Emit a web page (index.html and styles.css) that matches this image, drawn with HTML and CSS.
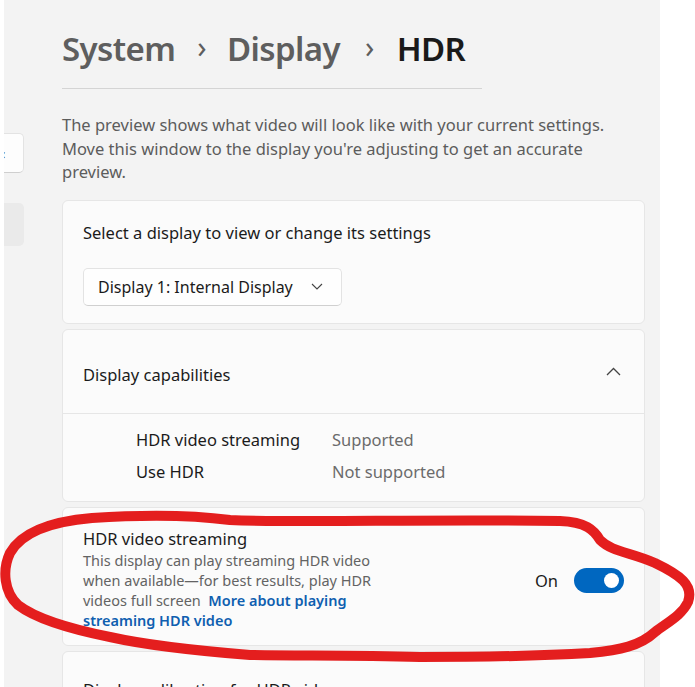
FILE: index.html
```html
<!DOCTYPE html>
<html lang="en">
<head>
<meta charset="utf-8">
<title>HDR</title>
<link rel="stylesheet" href="styles.css">
</head>
<body>
<div class="page">
  <div class="edge"></div>
  <div class="app">
    <nav class="nav">
      <div class="back-btn"><span class="back-glyph">‹</span></div>
      <div class="nav-item"></div>
    </nav>
    <main class="content">
      <h1 class="crumbs">
        <span class="crumb">System</span><span class="sep">›</span><span class="crumb">Display</span><span class="sep">›</span><span class="crumb current">HDR</span>
      </h1>
      <div class="rule"></div>
      <p class="intro">The preview shows what video will look like with your current settings. Move this window to the display you're adjusting to get an accurate preview.</p>

      <section class="card select-card">
        <div class="select-label">Select a display to view or change its settings</div>
        <div class="dropdown">
          <span>Display 1: Internal Display</span>
          <svg class="chev-down" width="12" height="7" viewBox="0 0 12 7"><path d="M1 1 L6 6 L11 1" fill="none" stroke="#444" stroke-width="1.1"/></svg>
        </div>
      </section>

      <section class="card caps-card">
        <div class="caps-head">
          <span>Display capabilities</span>
          <svg class="chev-up" width="15" height="9" viewBox="0 0 15 9"><path d="M1 8 L7.5 1.5 L14 8" fill="none" stroke="#444" stroke-width="1.3"/></svg>
        </div>
        <div class="caps-body">
          <div class="cap-row"><span class="cap-name">HDR video streaming</span><span class="cap-val">Supported</span></div>
          <div class="cap-row"><span class="cap-name">Use HDR</span><span class="cap-val">Not supported</span></div>
        </div>
      </section>

      <section class="card stream-card">
        <div class="stream-text">
          <div class="stream-title">HDR video streaming</div>
          <div class="stream-desc">This display can play streaming HDR video when available—for best results, play HDR videos full screen&nbsp; <a class="link">More about playing streaming HDR video</a></div>
        </div>
        <div class="toggle-wrap">
          <span class="toggle-label">On</span>
          <span class="toggle"><span class="knob"></span></span>
        </div>
      </section>

      <section class="card calib-card">
        <div class="calib-title">Display calibration for HDR video</div>
      </section>
    </main>
  </div>
  <div class="rest"></div>
</div>
<svg class="annotation" width="695" height="687" viewBox="0 0 695 687">
  <path d="M92 518 C150 514 200 516 230 520 C300 523 420 519 560 521 C586 522 594 530 600 540 C612 552 630 552 655 563 C680 575 694 585 688 602 C682 615 668 622 655 632 C640 646 620 650 590 653 C540 656 500 657 420 657 C350 655 300 656 250 655 C200 651 150 646 110 637 C70 629 35 618 18 605 C4 592 2 570 10 553 C20 535 45 522 92 518 Z" fill="none" stroke="#e41e1e" stroke-width="10" stroke-linejoin="round"/>
</svg>
</body>
</html>
```
FILE: styles.css
```css
* { box-sizing: border-box; }
html, body { margin: 0; padding: 0; }
body {
  width: 695px;
  height: 687px;
  overflow: hidden;
  background: #ffffff;
  font-family: "Noto Sans", "Open Sans", sans-serif;
  color: #1b1b1b;
  position: relative;
}
.page { display: flex; height: 687px; }
.edge { width: 4px; background: #ffffff; flex: none; }
.app {
  width: 656px;
  flex: none;
  background: #f3f3f3;
  display: flex;
  overflow: hidden;
}
.rest { flex: 1; background: #ffffff; }

.nav { width: 20px; flex: none; padding-top: 133px; position: relative; }
.back-btn {
  margin-left: -6px;
  width: 26px;
  height: 40px;
  background: #fdfdfd;
  border: 1px solid #e3e3e3;
  border-bottom-color: #cfcfcf;
  border-radius: 0 5px 5px 0;
  display: flex;
  align-items: center;
  overflow: hidden;
}
.back-glyph { font-size: 14px; color: #444; margin-left: 2px; }
.nav-item {
  margin-top: 30px;
  width: 20px;
  height: 43px;
  background: #eaeaea;
  border-radius: 0 5px 5px 0;
}

.content { margin-left: 38px; width: 583px; flex: none; }
.crumbs {
  margin: 26px 0 0 0;
  font-size: 33px;
  font-weight: 600;
  line-height: 46px;
  display: flex;
  align-items: baseline;
  letter-spacing: -0.6px;
}
.crumb { color: #5e5e5e; }
.crumb.current { color: #1a1a1a; }
.sep { color: #5e5e5e; font-size: 30px; font-weight: 400; margin: 0 21px 0 22px; position: relative; top: -3px; }
.sep + .crumb + .sep { margin: 0 23px 0 25px; }
.rule { margin-top: 15px; width: 420px; height: 1px; background: #d4d4d4; }
.intro {
  margin: 24px 0 0 0;
  font-size: 16.5px;
  line-height: 23.5px;
  color: #5c5c5c;
}

.card {
  background: #fbfbfb;
  border: 1px solid #e6e6e6;
  border-radius: 6px;
}
.select-card { margin-top: 16px; padding: 20px 20px 17px 20px; }
.select-label { font-size: 16.5px; line-height: 24px; }
.dropdown {
  margin-top: 23px;
  width: 259px;
  height: 38px;
  background: #fefefe;
  border: 1px solid #e3e3e3;
  border-bottom-color: #d0d0d0;
  border-radius: 5px;
  display: flex;
  align-items: center;
  padding: 0 14px;
  font-size: 16px;
  justify-content: space-between;
}
.chev-down { margin-right: 4px; }

.caps-card { margin-top: 5px; }
.caps-head {
  height: 84px;
  padding: 6px 23px 0 20px;
  display: flex;
  align-items: center;
  justify-content: space-between;
  font-size: 16.5px;
  border-bottom: 1px solid #e6e6e6;
}
.chev-up { margin-top: -6px; }
.caps-body { padding: 10px 0 13px 73px; }
.cap-row { display: flex; height: 32px; align-items: center; font-size: 16.5px; }
.cap-name { width: 196px; }
.cap-val { color: #6b6b6b; }

.stream-card {
  margin-top: 5px;
  height: 139px;
  display: flex;
  align-items: center;
  justify-content: space-between;
  padding: 6px 20px 0 20px;
}
.stream-text { width: 300px; }
.stream-title { font-size: 16.5px; line-height: 22px; }
.stream-desc { font-size: 14.5px; line-height: 20px; color: #636363; }
.link { color: #0f5fb0; font-weight: 600; }
.toggle-wrap { display: flex; align-items: center; gap: 16px; margin-top: 2px; }
.toggle-label { font-size: 16.5px; }
.toggle {
  width: 50px;
  height: 25px;
  border-radius: 13px;
  background: #0067c0;
  display: flex;
  align-items: center;
  justify-content: flex-end;
  padding-right: 5px;
}
.knob { width: 15px; height: 15px; border-radius: 50%; background: #ffffff; }

.calib-card { margin-top: 5px; height: 80px; padding: 27px 20px 0 20px; }
.calib-title { font-size: 16.5px; line-height: 22px; }

.annotation { position: absolute; left: 0; top: 0; pointer-events: none; }
```
